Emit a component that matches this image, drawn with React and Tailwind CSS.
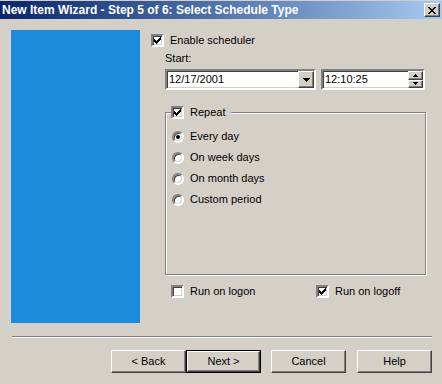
import React from 'react';

const sunken =
  'border-2 border-t-[#808080] border-l-[#808080] border-b-white border-r-white shadow-[inset_1px_1px_0_#404040,inset_-1px_-1px_0_#d4d0c8]';
const raised =
  'border border-t-white border-l-white border-b-[#404040] border-r-[#404040] shadow-[inset_-1px_-1px_0_#808080,inset_1px_1px_0_#d4d0c8] bg-[#d4d0c8]';

const CheckMark = () => (
  <svg width="7" height="7" viewBox="0 0 7 7" shapeRendering="crispEdges">
    <path
      fill="#000"
      d="M6 0h1v1h-1z M5 1h2v1h-2z M0 2h1v1h-1z M4 2h3v1h-3z M0 3h2v1h-2z M3 3h3v1h-3z M0 4h5v1h-5z M1 5h3v1h-3z M2 6h1v1h-1z"
    />
  </svg>
);

const Checkbox = ({ checked }) => (
  <div className={`w-[13px] h-[13px] bg-white flex items-center justify-center shrink-0 ${sunken}`}>
    {checked && <CheckMark />}
  </div>
);

const Radio = ({ checked }) => (
  <div className="w-[12px] h-[12px] rounded-full bg-white flex items-center justify-center shrink-0 border-2 border-t-[#808080] border-l-[#808080] border-b-white border-r-white shadow-[inset_1px_1px_0_#404040,inset_-1px_-1px_0_#d4d0c8]">
    {checked && <div className="w-[4px] h-[4px] rounded-full bg-black" />}
  </div>
);

const CheckRow = ({ checked, label }) => (
  <div className="flex items-center h-[13px]">
    <Checkbox checked={checked} />
    <span className="ml-[6px]">{label}</span>
  </div>
);

const RadioRow = ({ checked, label }) => (
  <div className="flex items-center h-[21px]">
    <Radio checked={checked} />
    <span className="ml-[6px]">{label}</span>
  </div>
);

const Triangle = ({ w, h, up }) => (
  <svg width={w} height={h} viewBox={`0 0 ${w} ${h}`} shapeRendering="crispEdges">
    <path fill="#000" d={up ? `M${w / 2} 0 L${w} ${h} L0 ${h}z` : `M0 0 L${w} 0 L${w / 2} ${h}z`} />
  </svg>
);

const WizButton = ({ label, isDefault }) =>
  isDefault ? (
    <div className="w-[75px] h-[23px] border border-black">
      <div className={`w-full h-full flex items-center justify-center ${raised}`}>{label}</div>
    </div>
  ) : (
    <div className={`w-[75px] h-[23px] flex items-center justify-center ${raised}`}>{label}</div>
  );

export default function App() {
  return (
    <div className="w-[442px] h-[384px] bg-[#d4d0c8] flex flex-col overflow-hidden text-black text-[11px] leading-[13px] font-['Liberation_Sans',Arial,sans-serif]">
      {/* Title bar */}
      <div className="mt-px h-[18px] flex items-center bg-linear-to-r from-[#0a246a] to-[#a6caf0] pl-[2px] pr-[2px]">
        <span className="flex-1 font-bold text-white text-[12px] whitespace-nowrap">
          New Item Wizard - Step 5 of 6: Select Schedule Type
        </span>
        <div className={`w-[16px] h-[14px] flex items-center justify-center ${raised}`}>
          <svg width="8" height="7" viewBox="0 0 8 7" shapeRendering="crispEdges">
            <path
              fill="#000"
              d="M0 0h2v1h-2z M6 0h2v1h-2z M1 1h2v1h-2z M5 1h2v1h-2z M2 2h4v1h-4z M3 3h2v1h-2z M2 4h4v1h-4z M1 5h2v1h-2z M5 5h2v1h-2z M0 6h2v1h-2z M6 6h2v1h-2z"
            />
          </svg>
        </div>
      </div>

      {/* Body */}
      <div className="flex mt-[11px] pl-[11px]">
        <div className="w-[129px] h-[293px] bg-[#1c8bdb]" />

        <div className="ml-[11px] flex flex-col">
          <div className="mt-[4px]">
            <CheckRow checked label="Enable scheduler" />
          </div>

          <div className="ml-[14px] mt-[5px]">Start:</div>

          <div className="ml-[14px] mt-[4px] flex">
            <div className={`w-[151px] h-[21px] bg-white flex items-center ${sunken}`}>
              <span className="flex-1 pl-[2px]">12/17/2001</span>
              <div className={`w-[16px] h-full flex items-center justify-center ${raised}`}>
                <Triangle w={7} h={4} />
              </div>
            </div>
            <div className={`ml-[5px] w-[104px] h-[21px] bg-white flex items-center ${sunken}`}>
              <span className="flex-1 pl-[2px]">12:10:25</span>
              <div className="w-[15px] h-full flex flex-col">
                <div className={`flex-1 flex items-center justify-center ${raised}`}>
                  <Triangle w={5} h={3} up />
                </div>
                <div className={`flex-1 flex items-center justify-center ${raised}`}>
                  <Triangle w={5} h={3} />
                </div>
              </div>
            </div>
          </div>

          {/* Repeat group */}
          <fieldset className="ml-[14px] mt-[16px] w-[261px] h-[169px] border border-[#808080] shadow-[inset_1px_1px_0_#fff,1px_1px_0_#fff]">
            <legend className="ml-[5px] pr-[6px] bg-[#d4d0c8]">
              <CheckRow checked label="Repeat" />
            </legend>
            <div className="pt-[7px] pl-[6px] flex flex-col">
              <RadioRow checked label="Every day" />
              <RadioRow label="On week days" />
              <RadioRow label="On month days" />
              <RadioRow label="Custom period" />
            </div>
          </fieldset>

          <div className="ml-[20px] mt-[10px] flex">
            <div className="w-[145px]">
              <CheckRow label="Run on logon" />
            </div>
            <CheckRow checked label="Run on logoff" />
          </div>
        </div>
      </div>

      {/* Separator */}
      <div className="mt-[13px] ml-[12px] w-[420px] h-[2px] border-t border-t-[#808080] border-b border-b-white" />

      {/* Buttons */}
      <div className="mt-[12px] pl-[111px] flex">
        <WizButton label="< Back" />
        <WizButton label="Next >" isDefault />
        <div className="ml-[10px]">
          <WizButton label="Cancel" />
        </div>
        <div className="ml-[11px]">
          <WizButton label="Help" />
        </div>
      </div>
    </div>
  );
}
